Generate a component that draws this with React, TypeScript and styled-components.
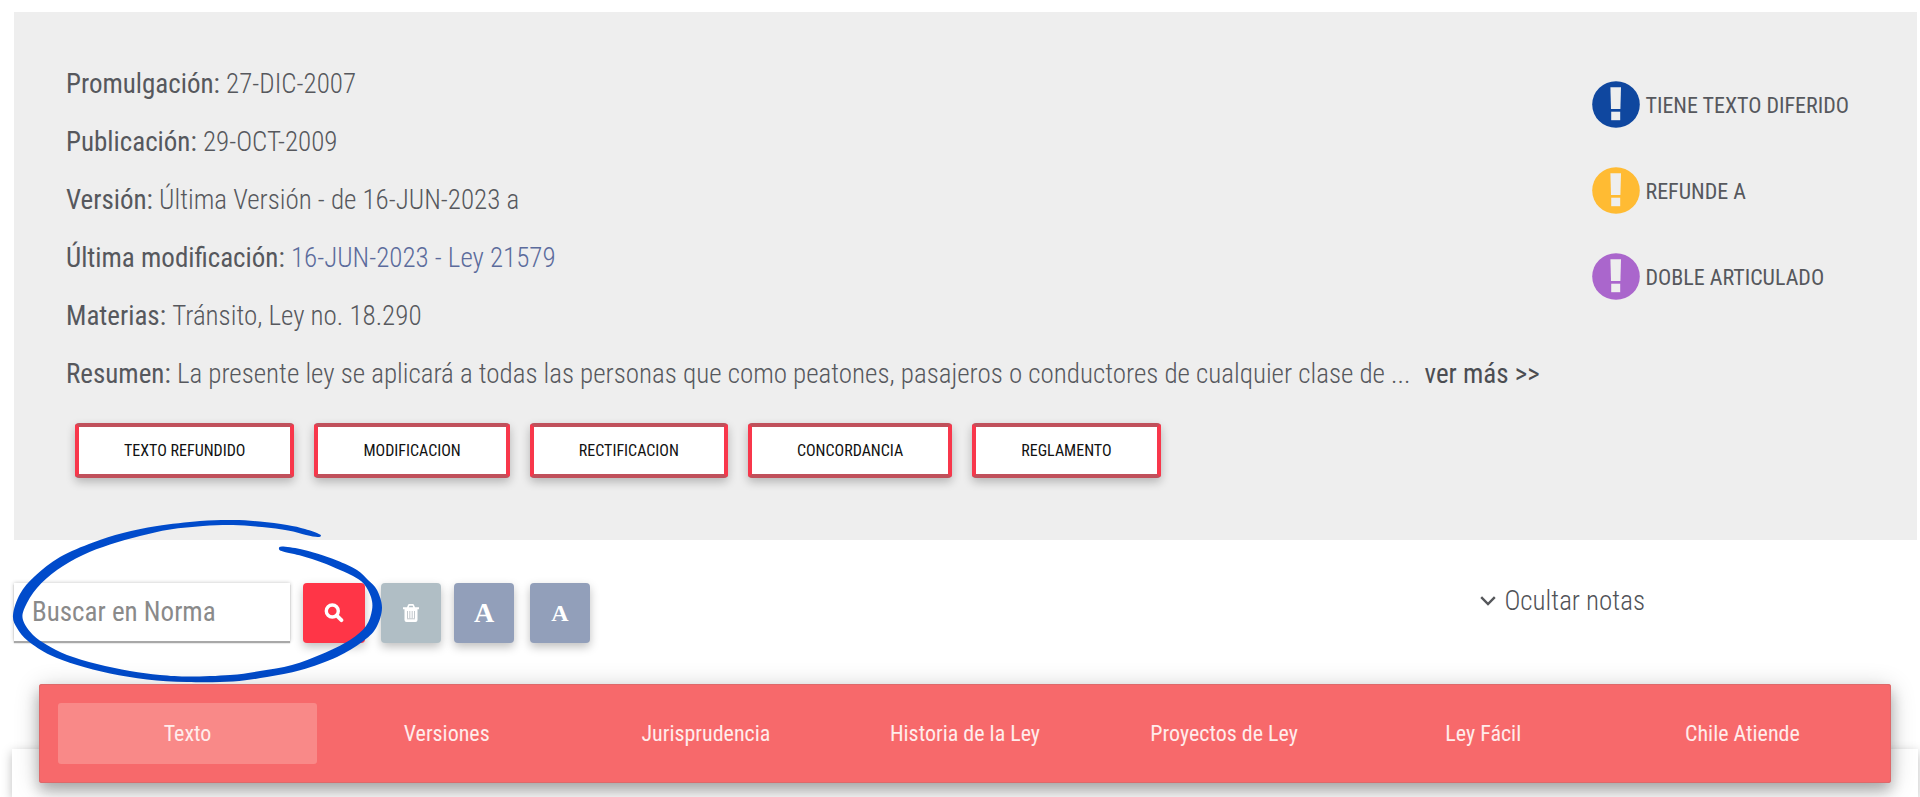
import React, { useState } from "react";
import styled, { createGlobalStyle } from "styled-components";

const GlobalStyle = createGlobalStyle`
  *, *::before, *::after { box-sizing: border-box; }
  body {
    margin: 0;
    background: #fff;
    color: #56585d;
    font-family: "Roboto Condensed", Roboto, "Liberation Sans", sans-serif;
  }
  button, input { font-family: inherit; }
`;

const Page = styled.div`
  display: flex;
  flex-direction: column;
  min-height: 100vh;
  padding: 12px 2px 0 12px;
  overflow: hidden;
`;

const Panel = styled.section`
  display: flex;
  justify-content: space-between;
  margin: 0 1px 0 2px;
  padding: 52px 68px 62px 52px;
  background: #eeeeee;
`;

const Details = styled.dl`
  display: flex;
  flex-direction: column;
  gap: 18px;
  margin: 0;
`;

const Detail = styled.div`
  font-size: 27px;
  line-height: 40px;
`;

const Label = styled.dt`
  display: inline;
  font-weight: 400;
`;

const Value = styled.dd`
  display: inline;
  margin: 0;
  font-weight: 300;
`;

const ValueLink = styled.a`
  color: #5b6b9c;
  text-decoration: none;
`;

const MoreLink = styled.a`
  margin-left: 8px;
  color: #4b4d52;
  font-weight: 400;
  text-decoration: none;
`;

const Relations = styled.div`
  display: flex;
  flex-wrap: wrap;
  gap: 20px;
  margin: 29px 0 0 9px;
`;

const RelationButton = styled.button`
  height: 55px;
  padding: 0 45px;
  border: 4px solid;
  border-color: #c0505b #f8374b;
  border-radius: 4px;
  background: #fff;
  color: #111;
  font-size: 16px;
  line-height: 20px;
  box-shadow: 0 4px 10px rgba(0, 0, 0, 0.24);
  cursor: pointer;
`;

const Notices = styled.ul`
  display: flex;
  flex-direction: column;
  gap: 39px;
  margin: 17px 0 0;
  padding: 0;
  list-style: none;
`;

const Notice = styled.li`
  display: flex;
  align-items: center;
  gap: 5px;
  font-size: 22px;
  line-height: 24px;
  white-space: nowrap;
`;

const NoticeText = styled.span`
  padding-top: 2px;
`;

const Toolbar = styled.div`
  position: relative;
  display: flex;
  align-items: flex-start;
  gap: 16px;
  margin: 0 1px 0 2px;
  padding: 43px 0 41px;
`;

const ToolGroup = styled.div`
  display: flex;
  gap: 13px;
`;

const SearchInput = styled.input`
  width: 276px;
  height: 58px;
  padding: 0 18px;
  border: 0;
  background: #fff;
  color: #505257;
  font-size: 27px;
  outline: none;
  box-shadow: 0 2px 1px #a8a8a8, 0 0 4px rgba(0, 0, 0, 0.24);
  &::placeholder { color: #8a8a8a; opacity: 1; }
`;

const ToolButton = styled.button<{ $color: string; $width?: number; $size?: number }>`
  display: flex;
  align-items: center;
  justify-content: center;
  width: ${(p) => p.$width ?? 60}px;
  height: 60px;
  padding: 0;
  border: 0;
  border-radius: 4px;
  background: ${(p) => p.$color};
  color: #fff;
  font-family: "Liberation Serif", serif;
  font-size: ${(p) => p.$size ?? 28}px;
  font-weight: 700;
  line-height: 32px;
  box-shadow: 0 4px 10px rgba(0, 0, 0, 0.25);
  cursor: pointer;
`;

const NotesToggle = styled.button`
  display: flex;
  align-items: center;
  gap: 8px;
  margin: 0 272px 0 auto;
  padding: 0;
  border: 0;
  background: none;
  color: #505257;
  font-size: 27px;
  font-weight: 300;
  line-height: 36px;
  cursor: pointer;
`;

const Mark = styled.svg`
  position: absolute;
  left: -14px;
  top: -30px;
  overflow: visible;
  pointer-events: none;
`;

const Tabs = styled.nav`
  position: relative;
  z-index: 1;
  display: flex;
  margin: 0 27px;
  padding: 19px;
  border-radius: 3px;
  background: #f7696b;
  box-shadow: 0 8px 14px rgba(0, 0, 0, 0.24), 0 4px 26px rgba(0, 0, 0, 0.2),
    inset 0 0 0 1px #dd696a;
`;

const Tab = styled.a<{ $active?: boolean }>`
  flex: 1;
  border-radius: 3px;
  background: ${(p) => (p.$active ? "#f98988" : "transparent")};
  color: #ffeceb;
  font-size: 22px;
  line-height: 61px;
  text-align: center;
  text-decoration: none;
`;

const Sheet = styled.main`
  flex: 1;
  min-height: 48px;
  margin-top: -34px;
  background: #fff;
  box-shadow: 0 3px 10px rgba(0, 0, 0, 0.26);
`;

const NoticeIcon = ({ color }: { color: string }) => (
  <svg width="48" height="47" viewBox="0 0 48 47" aria-hidden="true">
    <ellipse cx="24" cy="23.5" rx="23.8" ry="23.3" fill={color} />
    <path d="M18.4 6.300h10.600l-.6 21.700h-9.400z" fill="#eee" />
    <path d="M19.200 30.700h9v8.500h-9z" fill="#eee" />
  </svg>
);

const SearchIcon = () => (
  <svg width="20" height="20" viewBox="0 0 20 20" fill="none" stroke="#fff" aria-hidden="true">
    <circle cx="8.3" cy="8" r="6" strokeWidth="3.4" />
    <path d="M12.8 12.6l4.600 4.600" strokeWidth="3.800" strokeLinecap="round" />
  </svg>
);

const TrashIcon = () => (
  <svg width="16" height="18" viewBox="0 0 16 18" aria-hidden="true">
    <path
      d="M0 3.2h4L5.2.6Q5.500 0 6.200 0h3.600q.7 0 1 .6L12 3.200h4v2h-1.500V16q0 2-2 2h-9q-2 0-2-2V5.200H0zM5.800 3.200h4.400l-.6-1.400H6.400z"
      fill="#fff"
    />
    <path d="M4.500 7v7.500M6.800 7v7.500M9.200 7v7.500M11.500 7v7.500M4 14.800h8" stroke="#c3c9cd" />
  </svg>
);

const ChevronIcon = () => (
  <svg width="16" height="10" viewBox="0 0 16 10" aria-hidden="true">
    <path d="M1.200 1.200L8 8l6.800-6.800" fill="none" stroke="#55575b" strokeWidth="2.400" />
  </svg>
);

type Point = [number, number];

const strokeOutline: Point[] = [
  [320, 24.5], [305, 19], [287, 15], [260, 11.5], [233, 10], [200, 11], [157, 16],
  [123, 23], [93, 32.5], [60, 47], [35, 66], [20, 84], [13, 105], [17, 118],
  [28, 131], [50, 145], [77, 155], [110, 163.5], [147, 169.5], [187, 172],
  [233, 171.5], [267, 167], [301, 160], [337, 147], [362, 132], [376, 118],
  [382, 98], [377, 80], [368, 70], [357, 60], [337, 50.5], [317, 43.5],
  [300, 39], [282, 36.5], [279, 39], [283, 41.5], [302, 46], [322, 52.5],
  [340, 60], [353, 66], [364, 74], [371, 87], [372, 100], [366, 116],
  [350, 130], [322, 144], [292, 155], [260, 161], [230, 165], [190, 166.5],
  [160, 165], [130, 161], [97, 154], [67, 145], [47, 135], [33, 125],
  [23, 110], [25, 97], [37, 78], [57, 60], [83, 45], [110, 34.5], [140, 26],
  [170, 19.5], [203, 16], [233, 15], [262, 17], [288, 20.5], [306, 25],
  [318, 27],
];

/* Closed Catmull-Rom curve through the outline of the brush stroke */
const smoothPath = (points: Point[]) => {
  const n = points.length;
  const at = (i: number) => points[(i + n) % n];
  const curves = points.map((p1, i) => {
    const p0 = at(i - 1);
    const p2 = at(i + 1);
    const p3 = at(i + 2);
    const c1 = [p1[0] + (p2[0] - p0[0]) / 6, p1[1] + (p2[1] - p0[1]) / 6];
    const c2 = [p2[0] - (p3[0] - p1[0]) / 6, p2[1] - (p3[1] - p1[1]) / 6];
    return `C${c1} ${c2} ${p2}`;
  });
  return `M${points[0]}${curves.join("")}Z`;
};

const relations = [
  "TEXTO REFUNDIDO",
  "MODIFICACION",
  "RECTIFICACION",
  "CONCORDANCIA",
  "REGLAMENTO",
];

const notices = [
  { color: "#0f479f", text: "TIENE TEXTO DIFERIDO" },
  { color: "#ffbb33", text: "REFUNDE A" },
  { color: "#aa66cc", text: "DOBLE ARTICULADO" },
];

const tabs = [
  "Texto",
  "Versiones",
  "Jurisprudencia",
  "Historia de la Ley",
  "Proyectos de Ley",
  "Ley Fácil",
  "Chile Atiende",
];

export default function App() {
  const [query, setQuery] = useState("");

  return (
    <Page>
      <GlobalStyle />
      <Panel>
        <div>
          <Details>
            <Detail>
              <Label>Promulgación:</Label> <Value>27-DIC-2007</Value>
            </Detail>
            <Detail>
              <Label>Publicación:</Label> <Value>29-OCT-2009</Value>
            </Detail>
            <Detail>
              <Label>Versión:</Label> <Value>Última Versión - de 16-JUN-2023 a</Value>
            </Detail>
            <Detail>
              <Label>Última modificación:</Label>{" "}
              <Value>
                <ValueLink href="#ley-21579">16-JUN-2023 - Ley 21579</ValueLink>
              </Value>
            </Detail>
            <Detail>
              <Label>Materias:</Label> <Value>Tránsito, Ley no. 18.290</Value>
            </Detail>
            <Detail>
              <Label>Resumen:</Label>{" "}
              <Value>
                La presente ley se aplicará a todas las personas que como peatones,
                pasajeros o conductores de cualquier clase de ...{" "}
                <MoreLink href="#resumen">ver más &gt;&gt;</MoreLink>
              </Value>
            </Detail>
          </Details>
          <Relations>
            {relations.map((name) => (
              <RelationButton key={name} type="button">
                {name}
              </RelationButton>
            ))}
          </Relations>
        </div>
        <Notices>
          {notices.map((n) => (
            <Notice key={n.text}>
              <NoticeIcon color={n.color} />
              <NoticeText>{n.text}</NoticeText>
            </Notice>
          ))}
        </Notices>
      </Panel>

      <Toolbar>
        <ToolGroup>
          <SearchInput
            aria-label="Buscar en Norma"
            placeholder="Buscar en Norma"
            value={query}
            onChange={(e) => setQuery(e.target.value)}
          />
          <ToolButton type="button" $color="#ff3547" $width={62} aria-label="Buscar">
            <SearchIcon />
          </ToolButton>
        </ToolGroup>
        <ToolGroup>
          <ToolButton
            type="button"
            $color="#b0bec5"
            aria-label="Limpiar"
            onClick={() => setQuery("")}
          >
            <TrashIcon />
          </ToolButton>
          <ToolButton type="button" $color="#929fba" aria-label="Aumentar letra">
            A
          </ToolButton>
        </ToolGroup>
        <ToolButton type="button" $color="#929fba" $size={24} aria-label="Reducir letra">
          A
        </ToolButton>
        <NotesToggle type="button">
          <ChevronIcon />
          Ocultar notas
        </NotesToggle>
        <Mark width="390" height="180" viewBox="0 0 390 180" aria-hidden="true">
          <path d={smoothPath(strokeOutline)} fill="#004bcb" />
        </Mark>
      </Toolbar>

      <Tabs>
        {tabs.map((name, i) => (
          <Tab key={name} href={`#tab-${i}`} $active={i === 0}>
            {name}
          </Tab>
        ))}
      </Tabs>
      <Sheet />
    </Page>
  );
}
